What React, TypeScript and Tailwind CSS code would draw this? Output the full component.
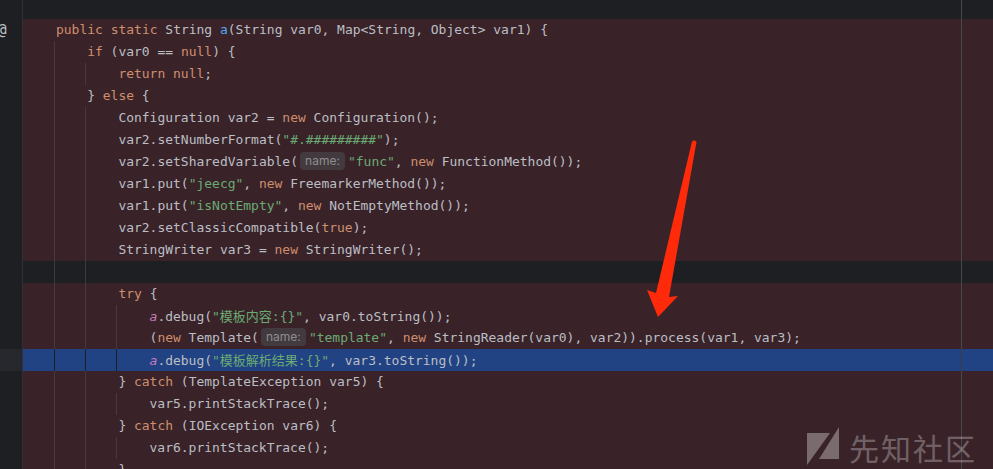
const K = ({ children }: { children: React.ReactNode }) => <span className="text-[#cf8e6d]">{children}</span>;
const S = ({ children }: { children: React.ReactNode }) => <span className="text-[#6aab73]">{children}</span>;
const Cjk = ({ children }: { children: React.ReactNode }) => (
  <span className="text-[13px] font-['Noto_Sans_CJK_SC',sans-serif]">{children}</span>
);
const Field = () => <span className="italic text-[#c77dbb]">a</span>;
const Hint = () => (
  <span className="inline-flex items-center justify-center ml-[2px] mr-[3px] w-[45px] h-[18px] rounded-[4px] bg-[#423a3e] text-[#8f8d8f] text-[12px] font-['Inter',sans-serif] align-[1px]">
    name:
  </span>
);

function Row({ level = 0, guides = 0, blank, active, children }: { level?: number; guides?: number; blank?: boolean; active?: boolean; children?: React.ReactNode }) {
  const bg = active ? 'bg-[#214283]' : blank ? 'bg-[#1e1f22]' : 'bg-[#392329]';
  const line = active ? 'border-[#1e1f22]' : blank ? 'border-[#393b40]' : 'border-[#47393d]';
  return (
    <div className="flex h-[22px] shrink-0">
      <div className={`w-[23px] shrink-0 border-r border-[#2f3034] ${active ? 'bg-[#26282e]' : 'bg-[#1e1f22]'}`} />
      <div className={`flex flex-1 min-w-0 pl-[31px] ${bg}`}>
        {Array.from({ length: Math.max(level, guides) }).map((_, i) => (
          <span key={i} className={`w-[31.2px] shrink-0 h-full ${i < guides ? `border-l ${line}` : ''}`} />
        ))}
        <div className="flex-1 pl-[2px] leading-[22px] whitespace-pre">{children}</div>
        <div className={`w-[32px] shrink-0 border-l ${active ? 'border-[#3a3b3f]' : 'border-[#48484c]'}`} />
      </div>
    </div>
  );
}

export default function App() {
  return (
    <div className="relative w-[993px] h-[469px] overflow-hidden flex flex-col bg-[#1e1f22] text-[#bcbec4] text-[12.98px] font-['DejaVu_Sans_Mono',monospace]">
      <div className="flex h-[19px] shrink-0">
        <div className="w-[23px] shrink-0 border-r border-[#2f3034]" />
        <div className="flex-1" />
        <div className="w-[32px] shrink-0 border-l border-[#48484c]" />
      </div>
      <span className="absolute left-[-3px] top-[18px] text-[16px] text-[#bcbec4]">@</span>

      <Row><K>public static</K> String <span className="text-[#56a8f5]">a</span>(String var0, Map&lt;String, Object&gt; var1) {'{'}</Row>
      <Row level={1} guides={1}><K>if</K> (var0 == <K>null</K>) {'{'}</Row>
      <Row level={2} guides={2}><K>return null</K>;</Row>
      <Row level={1} guides={1}>{'}'} <K>else</K> {'{'}</Row>
      <Row level={2} guides={2}>Configuration var2 = <K>new</K> Configuration();</Row>
      <Row level={2} guides={2}>var2.setNumberFormat(<S>"#.#########"</S>);</Row>
      <Row level={2} guides={2}>var2.setSharedVariable(<Hint /><S>"func"</S>, <K>new</K> FunctionMethod());</Row>
      <Row level={2} guides={2}>var1.put(<S>"jeecg"</S>, <K>new</K> FreemarkerMethod());</Row>
      <Row level={2} guides={2}>var1.put(<S>"isNotEmpty"</S>, <K>new</K> NotEmptyMethod());</Row>
      <Row level={2} guides={2}>var2.setClassicCompatible(<K>true</K>);</Row>
      <Row level={2} guides={2}>StringWriter var3 = <K>new</K> StringWriter();</Row>
      <Row guides={2} blank />
      <Row level={2} guides={2}><K>try</K> {'{'}</Row>
      <Row level={3} guides={3}><Field />.debug(<S>"<Cjk>模板内容</Cjk>:{'{}'}"</S>, var0.toString());</Row>
      <Row level={3} guides={3}>(<K>new</K> Template(<Hint /><S>"template"</S>, <K>new</K> StringReader(var0), var2)).process(var1, var3);</Row>
      <Row level={3} guides={3} active><Field />.debug(<S>"<Cjk>模板解析结果</Cjk>:{'{}'}"</S>, var3.toString());</Row>
      <Row level={2} guides={2}>{'}'} <K>catch</K> (TemplateException var5) {'{'}</Row>
      <Row level={3} guides={3}>var5.printStackTrace();</Row>
      <Row level={2} guides={2}>{'}'} <K>catch</K> (IOException var6) {'{'}</Row>
      <Row level={3} guides={3}>var6.printStackTrace();</Row>
      <Row level={2} guides={2}>{'}'}</Row>

      {/* annotation arrow */}
      <svg className="absolute left-0 top-0 pointer-events-none" width="993" height="469" viewBox="0 0 993 469">
        <path d="M692 141.5 Q694.5 139.5 696.5 142 L669 297 L678 296 L658 317 L647 290 L656 293 Z" fill="#ff2a0a" />
        <path d="M807 433 H830 L807 465 Z M839 427 V459 H819 Z" fill="#ffffff" fillOpacity="0.33" />
      </svg>

      {/* watermark */}
      <div className="absolute left-[849px] top-[425px] text-[30px] leading-[44px] tracking-[2px] whitespace-nowrap text-white/30 font-['Noto_Sans_CJK_SC',sans-serif]">先知社区</div>
    </div>
  );
}
